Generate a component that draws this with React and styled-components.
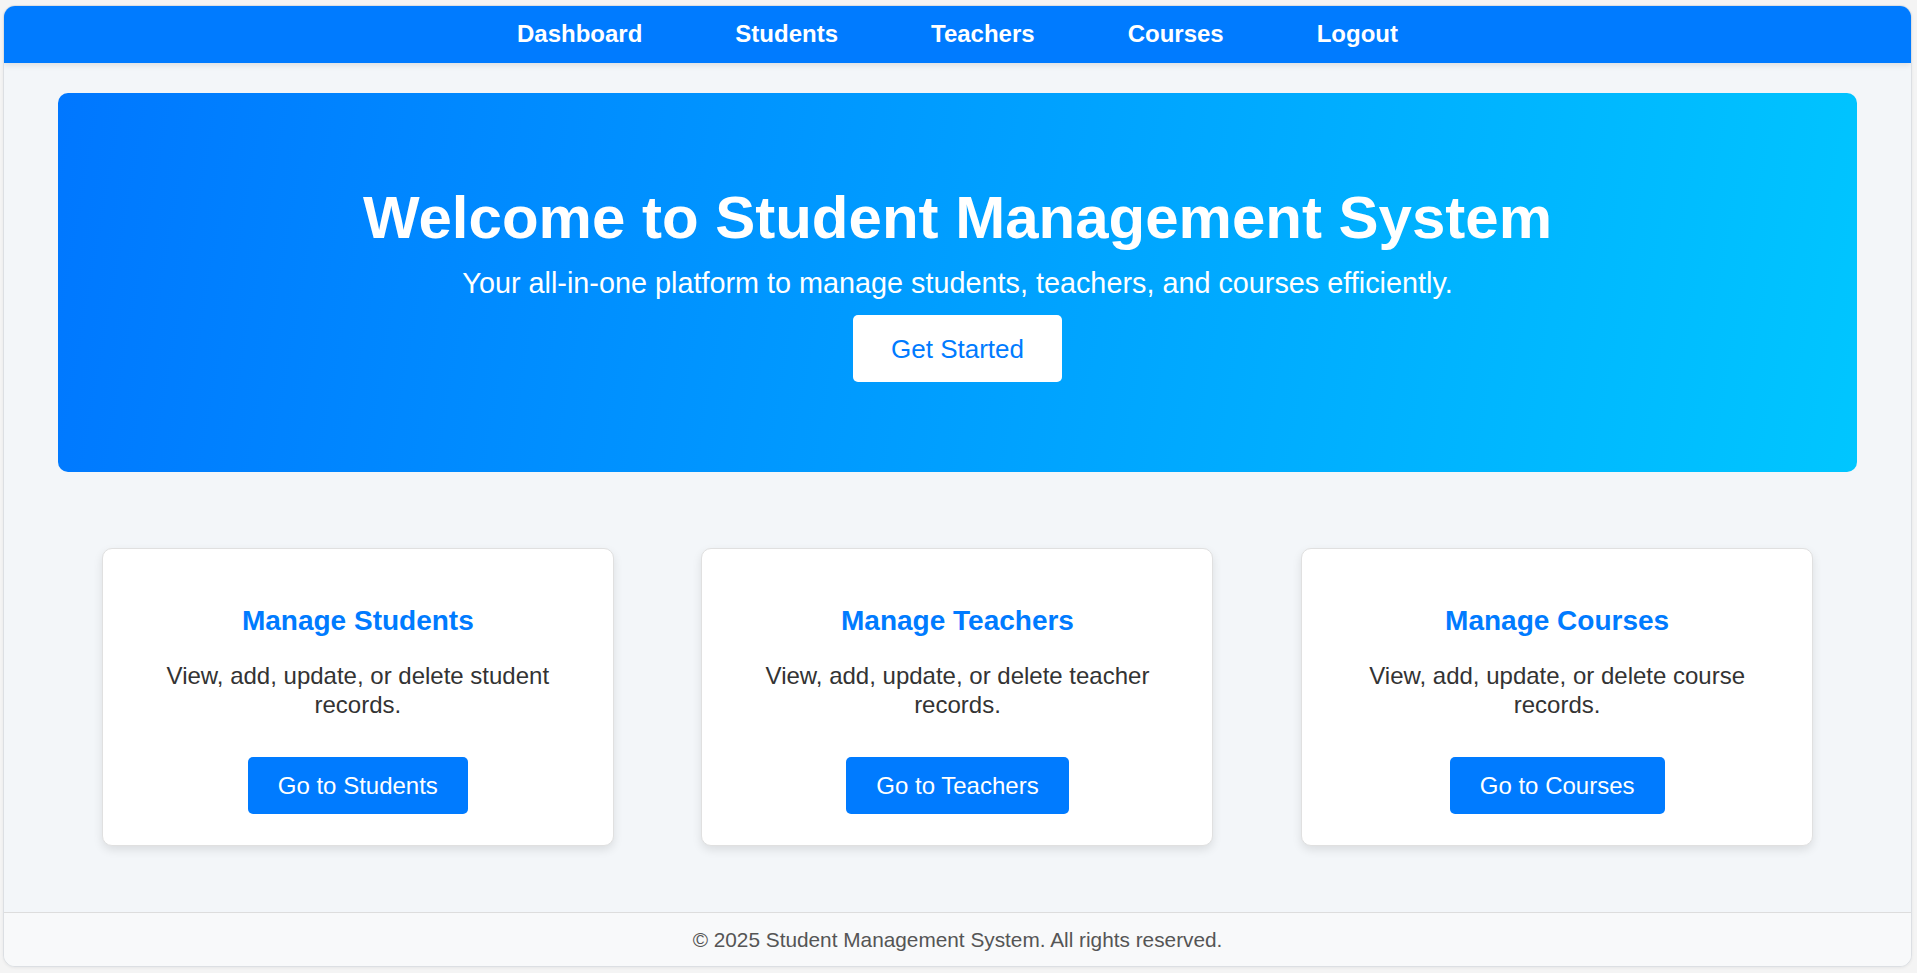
import React from "react";
import styled, { createGlobalStyle } from "styled-components";

const GlobalStyle = createGlobalStyle`
  html, body {
    margin: 0;
    padding: 0;
    background: #f4f4f4;
    font-family: "Liberation Sans", Arial, sans-serif;
  }
  * { box-sizing: border-box; }
`;

const Shell = styled.div`
  margin: 5px 5px 6px 3px;
  height: calc(100vh - 11px);
  display: flex;
  flex-direction: column;
  background: #f3f6f9;
  border: 1px solid #dcdfe3;
  border-radius: 12px;
  overflow: hidden;
  box-shadow: 0 1px 3px rgba(0, 0, 0, 0.06);
`;

const NavBar = styled.nav`
  height: 57px;
  flex: 0 0 auto;
  background: #007bff;
  display: flex;
  align-items: center;
  justify-content: center;
  gap: 93px;
  padding-bottom: 2px;
  box-shadow: 0 2px 6px rgba(0, 0, 0, 0.1);
  position: relative;
  z-index: 1;
`;

const NavLink = styled.a`
  color: #ffffff;
  font-weight: bold;
  font-size: 24px;
  text-decoration: none;
  line-height: 28px;
  cursor: pointer;
`;

const Main = styled.main`
  flex: 1 1 auto;
  padding: 30px 54px 0 54px;
`;

const Hero = styled.section`
  height: 379px;
  border-radius: 10px;
  background: linear-gradient(100deg, #0077ff 0%, #00c6ff 100%);
  display: flex;
  flex-direction: column;
  align-items: center;
  padding-top: 90px;
  color: #ffffff;
  text-align: center;
`;

const HeroTitle = styled.h1`
  margin: 0 0 15px;
  font-size: 60px;
  line-height: 69px;
  font-weight: bold;
`;

const HeroText = styled.p`
  margin: 0 0 15px;
  font-size: 28.8px;
  line-height: 33px;
`;

const HeroButton = styled.button`
  background: #ffffff;
  color: #007bff;
  border: none;
  border-radius: 5px;
  font-family: "Liberation Sans", Arial, sans-serif;
  font-size: 26px;
  line-height: 30px;
  padding: 19px 38px 18px;
  cursor: pointer;
`;

const CardRow = styled.section`
  display: flex;
  justify-content: space-around;
  margin-top: 76px;
`;

const Card = styled.div`
  width: 512px;
  background: #ffffff;
  border: 1px solid #e0e0e0;
  border-radius: 10px;
  box-shadow: 0 4px 10px rgba(0, 0, 0, 0.1);
  padding: 56px 30px 31px;
  display: flex;
  flex-direction: column;
  align-items: center;
  text-align: center;
`;

const CardTitle = styled.h3`
  margin: 0 0 24px;
  color: #007bff;
  font-size: 28px;
  line-height: 32px;
  font-weight: bold;
`;

const CardText = styled.p`
  margin: 0 0 38px;
  color: #333333;
  font-size: 24px;
  line-height: 29px;
`;

const CardButton = styled.button`
  background: #007bff;
  color: #ffffff;
  border: none;
  border-radius: 5px;
  font-family: "Liberation Sans", Arial, sans-serif;
  font-size: 24px;
  line-height: 27px;
  padding: 15px 30px;
  cursor: pointer;
`;

const Footer = styled.footer`
  flex: 0 0 auto;
  background: #f8f9fa;
  border-top: 1px solid #dddddd;
  text-align: center;
  padding: 15px 0 14px;
  color: #555555;
  font-size: 20.8px;
  line-height: 24px;
`;

const navItems = ["Dashboard", "Students", "Teachers", "Courses", "Logout"];

const cards = [
  { title: "Manage Students", text: "View, add, update, or delete student records.", btn: "Go to Students" },
  { title: "Manage Teachers", text: "View, add, update, or delete teacher records.", btn: "Go to Teachers" },
  { title: "Manage Courses", text: "View, add, update, or delete course records.", btn: "Go to Courses" },
];

export default function App() {
  return (
    <>
      <GlobalStyle />
      <Shell>
        <NavBar>
          {navItems.map((n) => (
            <NavLink key={n}>{n}</NavLink>
          ))}
        </NavBar>
        <Main>
          <Hero>
            <HeroTitle>Welcome to Student Management System</HeroTitle>
            <HeroText>
              Your all-in-one platform to manage students, teachers, and courses efficiently.
            </HeroText>
            <HeroButton>Get Started</HeroButton>
          </Hero>
          <CardRow>
            {cards.map((c) => (
              <Card key={c.title}>
                <CardTitle>{c.title}</CardTitle>
                <CardText>{c.text}</CardText>
                <CardButton>{c.btn}</CardButton>
              </Card>
            ))}
          </CardRow>
        </Main>
        <Footer>© 2025 Student Management System. All rights reserved.</Footer>
      </Shell>
    </>
  );
}
